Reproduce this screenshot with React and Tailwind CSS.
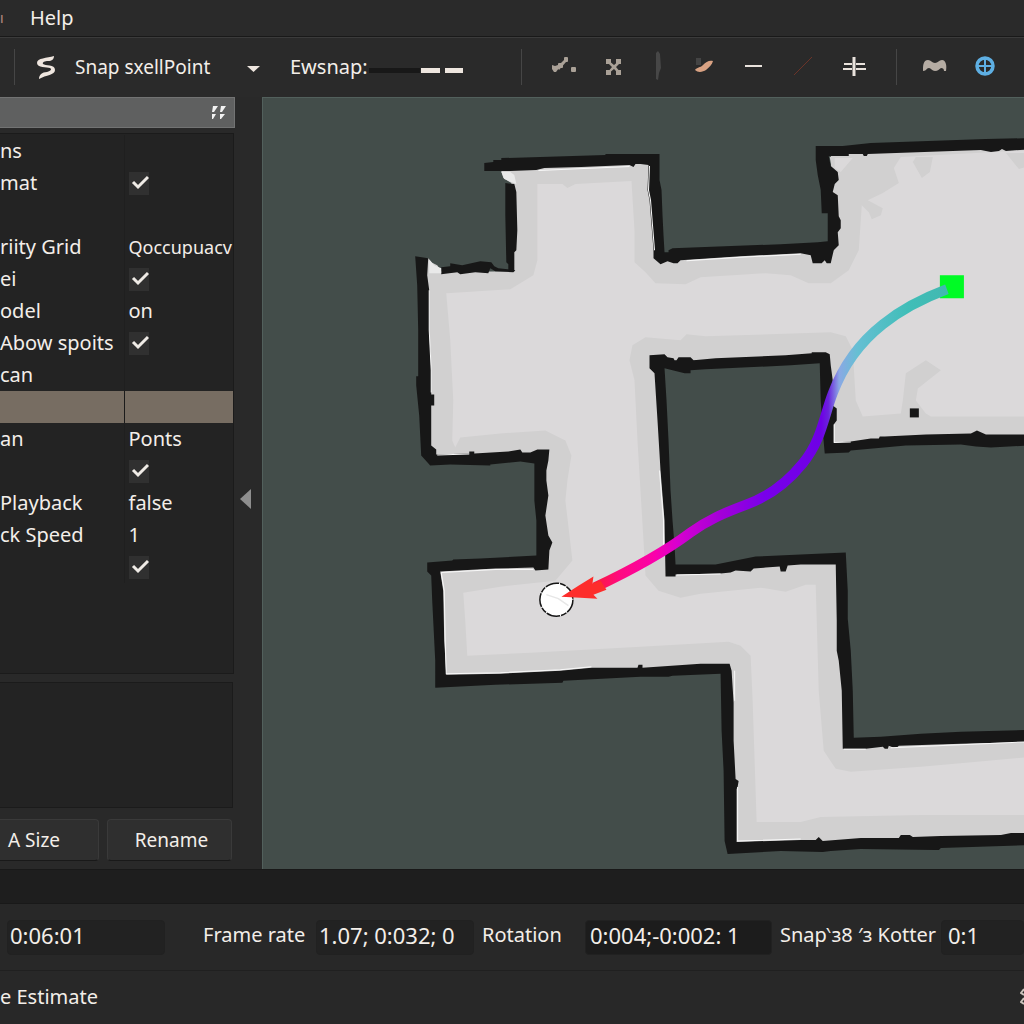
import React, { useState } from 'react';

const rows = [
    { name: 'ns' },
    { name: 'mat', checked: true },
    { name: '' },
    { name: 'riity Grid', value: 'Qoccupuacv', small: true },
    { name: 'ei', checked: true },
    { name: 'odel', value: 'on' },
    { name: 'Abow spoits', checked: true },
    { name: 'can' },
    { name: '', selected: true },
    { name: 'an', value: 'Ponts' },
    { name: '', checked: true },
    { name: 'Playback', value: 'false' },
    { name: 'ck Speed', value: '1' },
    { name: '', checked: true },
];

const tools = [
    {
        label: 'Waypoints',
        icon: (
            <g fill="#aaa197">
                <path d="M17 20l7-7 2 2-7 8z" />
                <rect x="24" y="10" width="4" height="5" rx="1" />
                <rect x="18" y="16" width="5" height="5" rx="1" />
                <path d="M12 18l3 1 3-1 1 3-3 4h-2l-2-3z" />
                <rect x="31" y="20" width="5" height="5" rx="1" />
            </g>
        ),
    },
    {
        label: 'Nodes',
        icon: (
            <g fill="#aaa197">
                <path d="M20 13l6 5 6-5 1 2-5 5 5 6-2 1-5-5-6 5-1-1 5-6-5-5z" />
                <rect x="18" y="12" width="5" height="5" />
                <rect x="28" y="12" width="5" height="5" />
                <rect x="18" y="23" width="5" height="5" />
                <rect x="28" y="23" width="5" height="5" />
            </g>
        ),
    },
    {
        label: 'Marker',
        icon: <path d="M20 6l2-2 2 3 1 14-2 5-1 7-2-1z" fill="#474747" />,
    },
    {
        label: 'Brush',
        icon: (
            <g>
                <path d="M12 11h5v7h-5z" fill="#444" />
                <path d="M11 23c2-3 5-2 8-5 3-3 6-5 10-4-1 4-4 6-7 9-3 2-8 3-11 0z" fill="#d9a283" />
            </g>
        ),
    },
    {
        label: 'Line',
        icon: <path d="M13 19h17" stroke="#e9e2dc" strokeWidth="2" />,
    },
    {
        label: 'Diagonal',
        icon: <path d="M14 28L32 10" stroke="#6b3328" strokeWidth="1" />,
    },
    {
        label: 'Align',
        icon: (
            <g stroke="#e9e2dc">
                <path d="M26 10v19" strokeWidth="3" />
                <path d="M16 17h8M28 17h9M15 22h9M28 22h10" strokeWidth="2" />
            </g>
        ),
    },
];

const viewTools = [
    {
        label: 'Terrain',
        icon: <path d="M12 24c0-5 0-11 5-11 3 0 4 3 7 3s4-3 7-3c4 0 5 6 4 11h-2c0-2-1-3-3-3-2 1-3 3-6 3s-4-3-6-3c-3 0-2 3-6 3z" fill="#b5aca3" />,
    },
    {
        label: 'Target',
        icon: (
            <g fill="none" stroke="#5eafe3">
                <circle cx="26" cy="19" r="8" strokeWidth="3.500" />
                <path d="M26 11v16M18 19h16" strokeWidth="2" />
            </g>
        ),
    },
];

const ToolButton = ({ tool }) => (
    <button type="button" aria-label={tool.label} className="h-10 w-12">
        <svg width="48" height="40" viewBox="0 0 48 40">{tool.icon}</svg>
    </button>
);

const Separator = () => <div className="h-9 w-px shrink-0 bg-[#464646]" />;

const Toolbar = () => (
    <div className="flex h-[60px] shrink-0 items-center overflow-hidden border-t border-[#3b3b3b] bg-[#2a2a2a] pb-0.5 pl-3.5">
        <Separator />
        <svg className="ml-5 shrink-0" width="24" height="24" viewBox="0 0 24 24" fill="#efe6df">
            <path d="M19 1c0 3-2 5-6 5-3 0-6 1-5 3 2 2 12 0 12 6 0 5-9 5-16 9 0-4 3-7 8-7 4-1 5-3 3-4C12 12 2 13 2 8 2 3 12 3 19 1z" />
        </svg>
        <div className="relative ml-4 w-[190px] shrink-0">
            <select aria-label="Snap mode" className="w-full appearance-none text-[19px] leading-7 outline-none">
                <option>Snap sxellPoint</option>
            </select>
            <svg className="pointer-events-none absolute top-3 right-1" width="14" height="8" viewBox="0 0 14 8">
                <path d="M0 1h13L6.500 7z" fill="#eee6df" />
            </svg>
        </div>
        <label htmlFor="ewsnap" className="ml-[25px] shrink-0">Ewsnap:</label>
        <input
            id="ewsnap"
            type="range"
            min="0"
            max="100"
            defaultValue="100"
            className="mt-2 ml-px h-5 w-[94px] shrink-0 appearance-none bg-transparent [&::-webkit-slider-runnable-track]:h-[5px] [&::-webkit-slider-runnable-track]:bg-[linear-gradient(90deg,#181818_51px,transparent_51px)] [&::-webkit-slider-thumb]:h-[5px] [&::-webkit-slider-thumb]:w-[42px] [&::-webkit-slider-thumb]:appearance-none [&::-webkit-slider-thumb]:bg-[linear-gradient(90deg,#eee6df_19px,transparent_19px,transparent_24px,#eee6df_24px)]"
        />
        <div className="ml-[58px] flex shrink-0 items-center">
            <Separator />
            <div className="ml-[18px] flex">
                {tools.map((tool) => <ToolButton key={tool.label} tool={tool} />)}
            </div>
            <div className="ml-5"><Separator /></div>
            <div className="ml-3.5 flex">
                {viewTools.map((tool) => <ToolButton key={tool.label} tool={tool} />)}
            </div>
        </div>
    </div>
);

const CheckCell = ({ label }) => {
    const [checked, setChecked] = useState(true);
    return (
        <label className="relative block h-[23px] w-5">
            <input
                type="checkbox"
                aria-label={label}
                checked={checked}
                onChange={() => setChecked(!checked)}
                className="block h-full w-full appearance-none bg-[#303030]"
            />
            {checked && (
                <svg className="pointer-events-none absolute inset-0" width="20" height="23" viewBox="0 0 20 23">
                    <path d="M4 10l5 5L19 5" fill="none" stroke="#efebe6" strokeWidth="3" />
                </svg>
            )}
        </label>
    );
};

const Sidebar = () => (
    <aside className="flex w-[262px] shrink-0 bg-[#292929]">
        <div className="flex w-[235px] flex-col">
            <div className="flex h-[31px] items-center justify-end border border-l-0 border-[#727373] bg-[#5f6060] pr-2">
                <svg width="16" height="16" viewBox="0 0 16 16" fill="#f2f2f2">
                    <path d="M3 1h5L4 7H2zM11 1h5l-4 6h-2zM2 9h4l-3 5H2zM10 9h5l-4 5h-1z" />
                </svg>
            </div>
            <div className="mt-[5px] mr-px h-[541px] border-t border-r border-b border-[#1b1b1b] bg-[#232323] pt-px">
                <table className="w-full table-fixed border-collapse">
                    <tbody>
                        {rows.map((row, i) => (
                            <tr key={i} className="h-8">
                                <td className={`w-[124px] overflow-hidden border-r p-0 whitespace-nowrap ${row.selected ? 'border-[#1b1b1b] bg-[#776d62]' : 'border-[#1f1f1f]'}`}>
                                    {row.name}
                                </td>
                                <td className={`overflow-hidden p-0 pl-1 whitespace-nowrap ${row.selected ? 'bg-[#776d62]' : ''}`}>
                                    {row.checked ? <CheckCell label={row.name || `Property ${i}`} /> : (
                                        <span className={row.small ? 'text-lg' : ''}>{row.value}</span>
                                    )}
                                </td>
                            </tr>
                        ))}
                    </tbody>
                </table>
            </div>
            <div className="mt-2 mr-0.5 min-h-[126px] flex-1 border-t border-r border-b border-[#1b1b1b] bg-[#232323]" />
            <div className="mt-[11px] mr-[3px] mb-2 flex h-[42px] gap-2 text-[19px]">
                <button type="button" className="w-[99px] rounded-r border border-l-0 border-[#3a3a3a] border-b-[#191919] bg-[#2f2f2f] pl-2 text-left">
                    A Size
                </button>
                <button type="button" className="flex-1 rounded border border-[#3a3a3a] border-b-[#191919] bg-[#2f2f2f] pl-1">
                    Rename
                </button>
            </div>
        </div>
        <button type="button" aria-label="Collapse panel" className="flex flex-1 items-center justify-center pt-8 pr-1.5">
            <svg width="12" height="22" viewBox="0 0 12 22">
                <path d="M0 11L11 1v20z" fill="#8e8e8e" />
            </svg>
        </button>
    </aside>
);

const MapView = () => (
    <main className="min-w-0 flex-1 overflow-hidden border-t border-l border-[#52605c] bg-[#434d4a]">
        <svg className="block h-full w-full" viewBox="263 98 761 770" preserveAspectRatio="xMinYMin slice">
            <defs>
                <linearGradient id="route" gradientUnits="userSpaceOnUse" x1="950" y1="0" x2="590" y2="0">
                    <stop offset="0" stopColor="#42b8b0" />
                    <stop offset=".12" stopColor="#40beb8" />
                    <stop offset=".26" stopColor="#66bfd3" />
                    <stop offset=".31" stopColor="#8aa8e4" />
                    <stop offset=".34" stopColor="#6a22dc" />
                    <stop offset=".36" stopColor="#6e00e6" />
                    <stop offset=".52" stopColor="#7900ea" />
                    <stop offset=".64" stopColor="#a400d8" />
                    <stop offset=".76" stopColor="#d800d0" />
                    <stop offset=".82" stopColor="#fa00ac" />
                    <stop offset=".92" stopColor="#ff0a80" />
                    <stop offset="1" stopColor="#fa2030" />
                </linearGradient>
            </defs>

            {/* free space */}
            <path
                d="M500 168L654 160L659 256L833 250L830 152L1030 144V440L828 447L825 358L655 361L670 570L840 558L847 742L1030 735V838L731 847L726 668L440 680L434 566L542 562V456L427 459L422 262L428 258L431 262L437 265L442 272L510 271L511 183L503 178z"
                fill="#d1d0d0"
            />
            <path
                d="M537 184L562 184 567 188 575 184 631 181L634 230V262L645 272L655 283L685 284L700 277L765 273L790 275L808 283L830 283L848 270L858 250L861 205L868 212L871 219L880 215L882 208L867 200L882 193L898 183L893 168L900 157L1030 150V416H930L925 413L915 400L917 388L940 370L925 360L905 373L902 400L900 413L862 416L855 400L852 350L845 336L830 332L705 336L686 334L680 340L645 337L632 345L629 360L634 380L637 440L640 490L643 540L645 575L658 590L680 597L700 593L730 590L760 587L785 591L805 584H815L818 690L823 750L835 768L850 771L920 766L1030 756V814H920L820 816L800 821H756L752 700L750 655L740 645L728 641L640 646L530 652L467 655L465 620L463 592L500 586L555 580L572 560L565 500L567 480L571 455L565 440L545 430L500 433L460 437L455 447L452 440L453 400L450 340L446 293L510 289L533 275L537 260z"
                fill="#dbd9da"
            />
            <path d="M829 157l26-1-15 17-8 2zM915 157h17l-3 15-8 6-9-16zM1005 153h25v12l-12 4z" fill="#d1d0d0" />
            <path d="M834 158l18 0-12 14-6-4z" fill="#dbd9da" />

            {/* walls */}
            <g fill="#171717">
                <path d="M484 163L493 162V160H501V158L605 155V154H659V180L661 190L662 215L663 235L664 252L668 252V250L672 248L780 244L817 242L827 241V213H821L820 190L817 175L815 160V146H842L870 143L985 139L1030 138V149L1005 151L1001 149L998 151L990 152L980 150L867 154L866 156H863L862 154L848 154V156H828L830 166L837 172L838 180L834 184L832 192L837 195L838 216L840 220V228L837 232L838 245L833 250L830 263H826L824 260L821 263H812L810 255L800 253L740 256L680 260L677 263H673L667 261L660 264L653 258V250L651 225L649 200L647 190L648 165L640 164L635 164L633 167L629 165L581 167L544 168L536 170L510 171H484z" />
                <path d="M505 183L514 184L516 192L517 230L516 250L514 252V271H508V264L506 262L505 215z" />
                <path d="M441 267L450 266V263L462 265L480 261L491 262L494 266L498 268L515 270L513 272L495 271L490 268L488 273L475 272L460 274L457 272L441 274z" />
                <path d="M415 256L428 258L427 275L429 290V330L431 370V394H434V405H431V445L436 449V454L469 453V451H474V453L508 451L520 449L522 452L530 452L537 449H549L548 460L546 470V480L548 495L545 515L548 535L552 542L549 550L548 569L535 570L533 567L495 568L440 571L443 590L444 640L446 674L500 673L560 670L591 667L637 667L638 664H642V667L700 663H729L731 670L733 702L733 740L735 778L738 780L737 786L736 788V841L800 839L815 839L818 836L822 840L860 837L898 837L900 834H909L912 836L940 835L1000 834L1010 832L1030 832V844L940 847L938 849H934L860 848L830 850L822 851L780 850L727 853L724 840L723 770L721 730L720 673L672 675L668 676L640 676L563 680L562 682L495 684L435 687V660L432 600L431 575L427 571V562L452 560L453 559L480 558L536 555V520L534 500V463L520 461L490 464V465L450 464L430 465L421 455L419 415L416 385V376H418L418 330L417 285z" />
                <path d="M649 355L664 354L667 357L673 358L674 360L676 360L678 357H690L693 360L715 358L785 355L811 353V352H825L829 354L830 365L832 380V405L836 408V420L833 424V442L850 441L870 438L878 438L879 436H884L925 434L970 433L976 430L985 434L1030 434V445L990 447L975 446L960 444L905 445L850 450L848 452L824 453L822 430L820 400L819 363L790 365L705 369L690 370V373H684L664 368L666 400L668 440L670 490L672 520L674 545L675 564H715L755 556L800 554L845 552L847 590V618L850 650L852 690L853 737L880 736L920 733L960 731L1030 729V741L960 743L898 745L896 747H893L888 745L887 748H884L882 746L865 748H842L841 690L838 660L836 650L836 620L835 564L800 564L787 565L785 571H780L779 566L765 567L753 568L750 571L735 570L730 572L720 573L675 574V576H665L664 520L660 470L657 420L654 373L649 368z" />
                <path d="M909 408h9v9h-9z" />
            </g>
            <g fill="none" stroke="#f8f8f8" strokeWidth="1">
                <path d="M429 290V330L431 370V392M437 454.500L469 453.500M649 166L648 190L650 200L652 225L654 250M441 572L495 569H533M441 572L444 590L445 640L446 673L500 672L560 669L591 666M659 470L663 520V550M676 574.500L720 573.500M737 786V840L800 838M734 670V700M843 748.500L865 748.500M890 747L960 744L1024 741M686 260.500L740 257L800 254M538 170.500L629 166.500M833.500 424V442L850 441.500" />
            </g>
            <path d="M501 172l9 0 4 3 2 9-12-5zM429 259l5 6 7 3v5h-12z" fill="#e9e9e9" />

            {/* planned route */}
            <rect x="939" y="275" width="24" height="23" fill="#00fb25" />
            <path
                d="M946 289C922 298 902 308 882 324C858 343 842 366 832 393C823 416 821 440 802 463C785 484 768 496 746 504C722 513 706 520 690 532C662 553 628 571 594 587"
                fill="none"
                stroke="url(#route)"
                strokeWidth="10"
            />
            <circle cx="556" cy="599" r="16.500" fill="#fff" />
            <circle cx="556" cy="599" r="16.500" fill="none" stroke="#151515" strokeWidth="1.500" strokeDasharray="14 1 6 1" />
            <path d="M546 594l12 4 10 7" fill="none" stroke="#e7e7e7" strokeWidth="1.500" />
            <path d="M561 596L578 585L593 576L592 583L600 580L606 589L593 594L597 598L580 597z" fill="#fd2d2b" />
        </svg>
    </main>
);

const StatusField = ({ id, label, value, labelClass, fieldClass }) => (
    <>
        {label && <label htmlFor={id} className={`shrink-0 pb-1 whitespace-nowrap ${labelClass}`}>{label}</label>}
        <input
            id={id}
            aria-label={label ? undefined : 'Elapsed time'}
            readOnly
            defaultValue={value}
            className={`h-[35px] rounded-sm border border-[#212121] pb-1 text-[22px] outline-none ${fieldClass}`}
        />
    </>
);

const StatusBar = () => (
    <div className="flex h-[67px] shrink-0 items-center overflow-hidden border-t border-[#191919] bg-[#282828] pl-[7px]">
        <StatusField id="time" value="0:06:01" fieldClass="w-[158px] shrink-0 bg-[#222] pl-0.5" />
        <StatusField id="rate" label="Frame rate" value="1.07; 0:032; 0" labelClass="ml-[38px] w-[113px]" fieldClass="w-[158px] shrink-0 bg-[#222] pl-0.5" />
        <StatusField id="rotation" label="Rotation" value="0:004;-0:002: 1" labelClass="ml-2 w-[103px]" fieldClass="w-[187px] shrink-0 bg-[#1c1c1c] pl-1" />
        <StatusField id="snap" label="Snap‵ɜ8 ′ɜ Kotter" value="0:1" labelClass="ml-2 w-[161px]" fieldClass="min-w-0 flex-1 bg-[#222] pl-1.5" />
    </div>
);

const App = () => {
    return (
        <div className="flex min-h-screen flex-col bg-[#1e1e1e] font-['Noto_Sans',sans-serif] text-xl text-[#f3eee9]">
            <nav className="flex h-[37px] shrink-0 items-center overflow-hidden border-b border-[#191919] bg-[#2a2a2a]">
                <span className="w-[30px] text-sm text-[#b98d80]">ı</span>
                <a href="#help">Help</a>
            </nav>
            <Toolbar />
            <div className="flex flex-1">
                <Sidebar />
                <MapView />
            </div>
            <div className="h-[34px] shrink-0 border-t border-[#191919] bg-[#1e1e1e]" />
            <StatusBar />
            <footer className="flex h-[55px] shrink-0 items-center justify-between overflow-hidden border-t border-[#202020] bg-[#282828] pb-0.5">
                <span>e Estimate</span>
                <svg width="4" height="20" viewBox="0 0 4 20" fill="none" stroke="#c9c2bb" strokeWidth="2">
                    <path d="M4 2L1 6l3 2M4 11L1 15l3 2" />
                </svg>
            </footer>
        </div>
    );
};

export default App;
